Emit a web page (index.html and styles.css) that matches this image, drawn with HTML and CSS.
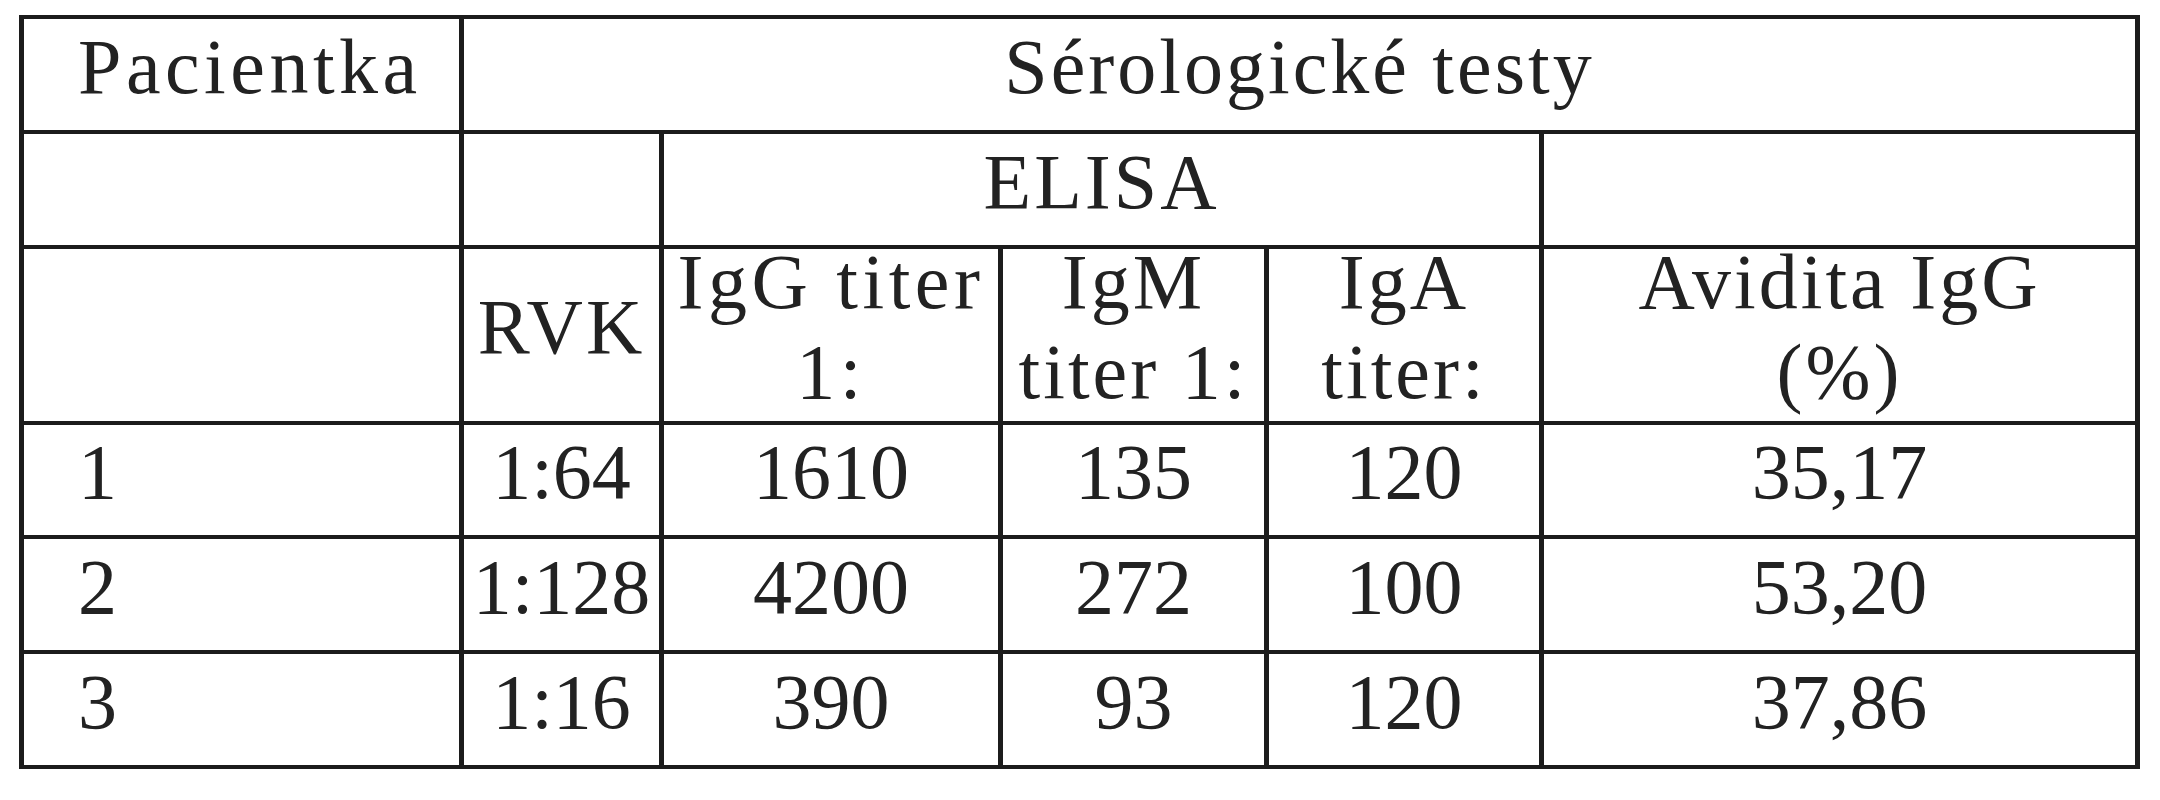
FILE: index.html
```html
<!DOCTYPE html>
<html lang="cs">
<head>
<meta charset="utf-8">
<title>Sérologické testy</title>
<link rel="stylesheet" href="styles.css">
</head>
<body>
<div class="sero-table" role="table">
  <div class="cell left text wide" role="columnheader">Pacientka</div>
  <div class="cell text span-all" role="columnheader">Sérologické testy</div>

  <div class="cell"></div>
  <div class="cell"></div>
  <div class="cell text span-elisa">ELISA</div>
  <div class="cell"></div>

  <div class="cell"></div>
  <div class="cell text">RVK</div>
  <div class="cell text wide">IgG titer<br>1:</div>
  <div class="cell text">IgM<br>titer 1:</div>
  <div class="cell text">IgA<br>titer:</div>
  <div class="cell text">Avidita IgG<br>(%)</div>

  <div class="cell left">1</div>
  <div class="cell">1:64</div>
  <div class="cell">1610</div>
  <div class="cell">135</div>
  <div class="cell">120</div>
  <div class="cell">35,17</div>

  <div class="cell left">2</div>
  <div class="cell">1:128</div>
  <div class="cell">4200</div>
  <div class="cell">272</div>
  <div class="cell">100</div>
  <div class="cell">53,20</div>

  <div class="cell left">3</div>
  <div class="cell">1:16</div>
  <div class="cell">390</div>
  <div class="cell">93</div>
  <div class="cell">120</div>
  <div class="cell">37,86</div>
</div>
</body>
</html>
```

FILE: styles.css
```css
html, body {
  margin: 0;
  padding: 0;
  background: #ffffff;
}

body {
  padding: 15px 0 0 19px;
  font-family: "Liberation Serif", "Times New Roman", serif;
  font-size: 78px;
  color: #222222;
}

.sero-table {
  display: inline-grid;
  grid-template-columns: 435px 195px 334px 261px 270px 591px;
  grid-template-rows: 111px 111px 172px 110px 111px 111px;
  column-gap: 5px;
  row-gap: 4px;
  padding: 4px 5px;
  background: #1c1c1c;
}

.cell {
  background: #ffffff;
  display: flex;
  align-items: center;
  justify-content: center;
  text-align: center;
  line-height: 90px;
  padding-bottom: 16px;
  box-sizing: border-box;
  white-space: nowrap;
  overflow: visible;
}

.text {
  letter-spacing: 3px;
}

.text.wide {
  letter-spacing: 4.5px;
}

.left {
  justify-content: flex-start;
  text-align: left;
  padding-left: 54px;
}

.span-all {
  grid-column: 2 / span 5;
}

.span-elisa {
  grid-column: 3 / span 3;
}
```
